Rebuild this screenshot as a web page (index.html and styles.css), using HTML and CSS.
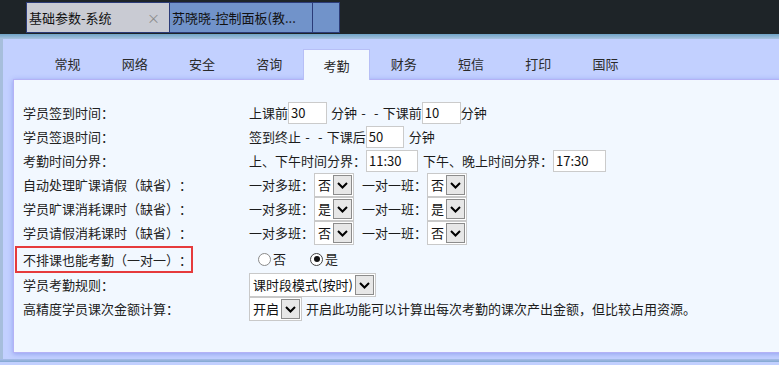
FILE: index.html
```html
<!DOCTYPE html>
<html lang="zh-CN">
<head>
<meta charset="utf-8">
<title>基础参数-系统</title>
<link rel="stylesheet" href="styles.css">
</head>
<body>
<div class="topbar">
  <div class="wtab wtab-cur"><span class="wtab-title">基础参数-系统</span><span class="wtab-close">×</span></div>
  <div class="wtab wtab-other"><span class="wtab-title">苏晓晓-控制面板(教...</span></div>
  <div class="wtab wtab-other wtab-small"></div>
</div>
<div class="strip"></div>
<div class="main">
  <div class="edge"></div>
  <div class="area">
    <div class="tabs">
      <div class="tab">常规</div>
      <div class="tab">网络</div>
      <div class="tab">安全</div>
      <div class="tab">咨询</div>
      <div class="tab active">考勤</div>
      <div class="tab">财务</div>
      <div class="tab">短信</div>
      <div class="tab">打印</div>
      <div class="tab">国际</div>
    </div>
    <div class="panel">
      <div class="form">
        <div class="lbl">学员签到时间：</div>
        <div class="val">上课前<span class="inp w39">30</span><span class="gap4"></span><span class="dash">分钟&nbsp;-&nbsp;&nbsp;-&nbsp;下课前</span><span class="inp w39">10</span>分钟</div>

        <div class="lbl">学员签退时间：</div>
        <div class="val"><span class="dash">签到终止&nbsp;-&nbsp;&nbsp;-&nbsp;下课后</span><span class="inp w38">50</span><span class="gap5"></span>分钟</div>

        <div class="lbl">考勤时间分界：</div>
        <div class="val">上、下午时间分界：<span class="inp w52">11:30</span><span class="gap5"></span>下午、晚上时间分界：<span class="inp w53">17:30</span></div>

        <div class="lbl">自动处理旷课请假（缺省）：</div>
        <div class="val">一对多班：<span class="sel w40"><span class="sel-text">否</span><span class="sel-btn"><svg width="11" height="7" viewBox="0 0 11 7"><path d="M1 1L5.5 5.5L10 1" fill="none" stroke="#000" stroke-width="2"/></svg></span></span><span class="gap8"></span>一对一班：<span class="sel w40"><span class="sel-text">否</span><span class="sel-btn"><svg width="11" height="7" viewBox="0 0 11 7"><path d="M1 1L5.5 5.5L10 1" fill="none" stroke="#000" stroke-width="2"/></svg></span></span></div>

        <div class="lbl">学员旷课消耗课时（缺省）：</div>
        <div class="val">一对多班：<span class="sel w40"><span class="sel-text">是</span><span class="sel-btn"><svg width="11" height="7" viewBox="0 0 11 7"><path d="M1 1L5.5 5.5L10 1" fill="none" stroke="#000" stroke-width="2"/></svg></span></span><span class="gap8"></span>一对一班：<span class="sel w40"><span class="sel-text">是</span><span class="sel-btn"><svg width="11" height="7" viewBox="0 0 11 7"><path d="M1 1L5.5 5.5L10 1" fill="none" stroke="#000" stroke-width="2"/></svg></span></span></div>

        <div class="lbl">学员请假消耗课时（缺省）：</div>
        <div class="val">一对多班：<span class="sel w40"><span class="sel-text">否</span><span class="sel-btn"><svg width="11" height="7" viewBox="0 0 11 7"><path d="M1 1L5.5 5.5L10 1" fill="none" stroke="#000" stroke-width="2"/></svg></span></span><span class="gap8"></span>一对一班：<span class="sel w40"><span class="sel-text">否</span><span class="sel-btn"><svg width="11" height="7" viewBox="0 0 11 7"><path d="M1 1L5.5 5.5L10 1" fill="none" stroke="#000" stroke-width="2"/></svg></span></span></div>

        <div class="lbl"><span class="hl">不排课也能考勤（一对一）：</span></div>
        <div class="val radios"><span class="radio"></span><span class="rlabel">否</span><span class="radio checked"></span><span class="rlabel">是</span></div>

        <div class="lbl">学员考勤规则：</div>
        <div class="val"><span class="sel w127"><span class="sel-text">课时段模式(按时)</span><span class="sel-btn"><svg width="11" height="7" viewBox="0 0 11 7"><path d="M1 1L5.5 5.5L10 1" fill="none" stroke="#000" stroke-width="2"/></svg></span></span></div>

        <div class="lbl">高精度学员课次金额计算：</div>
        <div class="val"><span class="sel w53"><span class="sel-text">开启</span><span class="sel-btn"><svg width="11" height="7" viewBox="0 0 11 7"><path d="M1 1L5.5 5.5L10 1" fill="none" stroke="#000" stroke-width="2"/></svg></span></span><span class="gap4"></span>开启此功能可以计算出每次考勤的课次产出金额，但比较占用资源。</div>
      </div>
    </div>
  </div>
</div>
<div class="bottom"></div>
</body>
</html>
```

FILE: styles.css
```css
html, body {
  margin: 0;
  padding: 0;
}
body {
  width: 779px;
  height: 365px;
  overflow: hidden;
  font-family: "Noto Sans CJK SC", "Microsoft YaHei", sans-serif;
  font-size: 13px;
  color: #1c1c1c;
  background: #c2d0ff;
  text-spacing-trim: space-all;
}

/* window tabs */
.topbar {
  height: 34px;
  box-sizing: border-box;
  background: #1e2428;
  display: flex;
  padding: 2px 0 0 26px;
}
.wtab {
  height: 31px;
  box-sizing: border-box;
  border: 1px solid #2b3b78;
  margin-right: -1px;
  display: flex;
  align-items: center;
  padding-left: 2px;
  color: #111;
  white-space: nowrap;
}
.wtab-cur {
  width: 144px;
  background: #c9cbd3;
}
.wtab-other {
  width: 144px;
  background: #7193ca;
}
.wtab-small {
  width: 28px;
}
.wtab-close {
  margin-left: auto;
  margin-right: 9px;
  color: #8a8a8a;
  font-size: 13px;
}

.strip {
  height: 5px;
  background: linear-gradient(#6fa3c6, #a9c3e0);
}

.main {
  display: flex;
  height: 323px;
}
.edge {
  width: 3px;
  background: #a6bedc;
}
.area {
  flex: 1;
  background: #c2d0ff;
  padding: 10px 0 0 10px;
  overflow: hidden;
}

/* page tabs */
.tabs {
  display: flex;
  margin-left: 21px;
  height: 30px;
  align-items: flex-end;
}
.tab {
  width: 67.25px;
  flex: none;
  text-align: center;
  line-height: 30px;
  height: 30px;
  color: #2a2a2a;
}
.tab.active {
  height: 31px;
  box-sizing: border-box;
  line-height: 32px;
  margin-bottom: -1px;
  background: #f2f8ff;
  border: 1px solid #b7bff6;
  border-bottom: none;
  position: relative;
  z-index: 1;
}

.panel {
  width: 820px;
  height: 274px;
  box-sizing: border-box;
  background: #f2f8ff;
  border: 1px solid #b4b2f6;
  box-shadow: 0 1px 5px rgba(90, 100, 220, 0.45);
  padding: 21px 0 0 9px;
}

.form {
  display: grid;
  grid-template-columns: 226px auto;
  grid-template-rows: repeat(6, 24px) 28px 24px 24px;
}
.lbl, .val {
  display: flex;
  align-items: center;
  white-space: nowrap;
  line-height: 24px;
}
.lbl {
  color: #222;
}
.dash {
  word-spacing: 1.25px;
}
.hl {
  margin-left: -8px;
  margin-top: 1px;
  height: 27px;
  width: 178px;
  box-sizing: border-box;
  border: 2px solid #e63b3c;
  padding-left: 6px;
  display: flex;
  align-items: center;
}

.inp {
  display: inline-block;
  height: 22px;
  line-height: 20px;
  box-sizing: border-box;
  border: 1px solid #cbcbcb;
  background: #fff;
  padding-left: 2px;
  color: #111;
}
.w38 { width: 38px; }
.w39 { width: 39px; }
.w40 { width: 40px; }
.w52 { width: 52px; }
.w53 { width: 53px; }
.w127 { width: 127px; }
.gap4 { display: inline-block; width: 4px; }
.gap5 { display: inline-block; width: 5px; }
.gap8 { display: inline-block; width: 8px; }

.sel {
  display: inline-flex;
  align-items: center;
  height: 24px;
  box-sizing: border-box;
  border: 1px solid #c9c9c9;
  background: #fff;
  padding: 0 1px 0 3px;
  color: #111;
}
.sel-text {
  line-height: 20px;
}
.sel-btn {
  margin-left: auto;
  width: 19px;
  height: 20px;
  box-sizing: border-box;
  border: 1px solid #8c8c8c;
  background: #e7e7e7;
  display: flex;
  align-items: center;
  justify-content: center;
}

.radios {
  padding-left: 9px;
}
.radio {
  width: 13px;
  height: 13px;
  box-sizing: border-box;
  border-radius: 50%;
  border: 1px solid #8a8a8a;
  background: #fff;
  display: inline-flex;
  align-items: center;
  justify-content: center;
  margin-right: 2px;
}
.radio.checked {
  border-color: #444;
}
.radio.checked::after {
  content: "";
  width: 6px;
  height: 6px;
  border-radius: 50%;
  background: #111;
}
.rlabel {
  margin-right: 24px;
}

.bottom {
  height: 3px;
  background: linear-gradient(#a8bce8, #82a8d0);
  margin-top: -3px;
  position: relative;
}
```
